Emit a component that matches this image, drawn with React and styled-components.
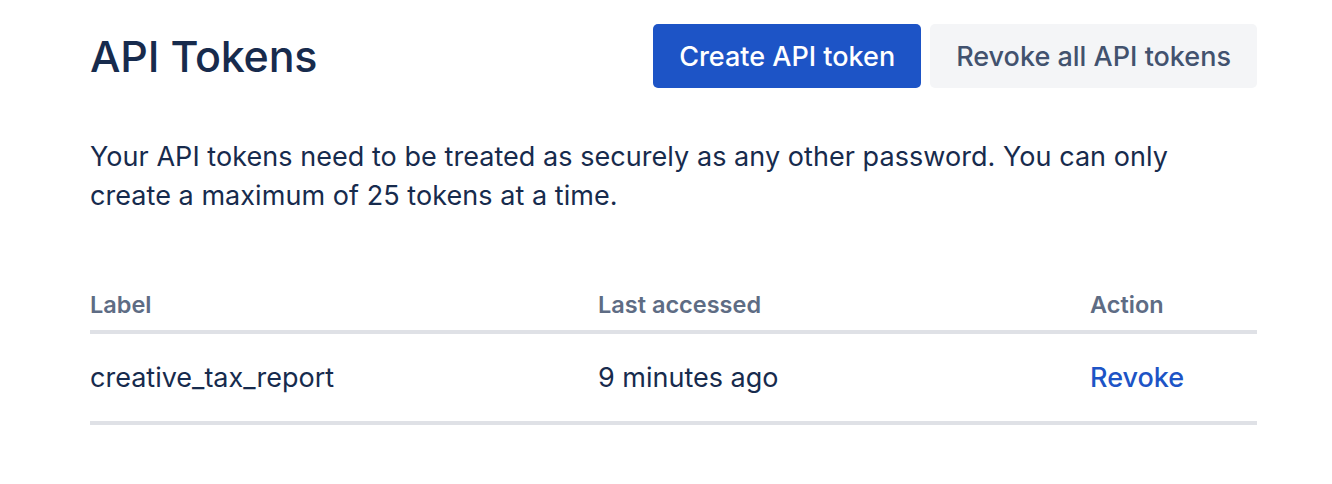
import React from "react";
import styled, { createGlobalStyle } from "styled-components";

const GlobalStyle = createGlobalStyle`
  body {
    margin: 0;
    background: #ffffff;
    font-family: Inter, "Noto Sans", "Liberation Sans", sans-serif;
    color: #172b4d;
  }
`;

const Page = styled.div`
  padding: 24px 75px 0 90px;
  width: 1167px;
`;

const Header = styled.div`
  display: flex;
  align-items: center;
  justify-content: space-between;
  height: 64px;
`;

const Title = styled.h1`
  margin: 0;
  font-size: 43px;
  font-weight: 500;
  letter-spacing: -0.2px;
  color: #172b4d;
`;

const Actions = styled.div`
  display: flex;
  gap: 9px;
`;

const Button = styled.button`
  height: 64px;
  padding: 0 26px;
  border: none;
  border-radius: 5px;
  font-family: inherit;
  font-size: 27px;
  font-weight: 500;
  cursor: pointer;
  background: ${(p) => (p.$primary ? "#1d54c6" : "#f4f5f7")};
  color: ${(p) => (p.$primary ? "#ffffff" : "#42526e")};
`;

const Intro = styled.p`
  margin: 49px 0 0;
  font-size: 27px;
  line-height: 39px;
  letter-spacing: 0.05px;
  color: #172b4d;
`;

const Table = styled.table`
  width: 100%;
  margin-top: 75px;
  border-collapse: collapse;
`;

const Th = styled.th`
  text-align: left;
  padding: 0 0 10px;
  height: 30px;
  line-height: 30px;
  font-size: 23.5px;
  font-weight: 600;
  color: #5e6c84;
  border-bottom: 4px solid #dfe1e6;
  width: ${(p) => p.$w};
`;

const Td = styled.td`
  padding: 0;
  height: 87px;
  font-size: 27px;
  color: #172b4d;
  border-bottom: 4px solid #dfe1e6;
`;

const LinkButton = styled.a`
  color: #1d54c6;
  font-weight: 500;
  text-decoration: none;
  cursor: pointer;
`;

export default function App() {
  return (
    <>
      <GlobalStyle />
      <Page>
        <Header>
          <Title>API Tokens</Title>
          <Actions>
            <Button $primary>Create API token</Button>
            <Button>Revoke all API tokens</Button>
          </Actions>
        </Header>
        <Intro>
          Your API tokens need to be treated as securely as any other password. You can only
          <br />
          create a maximum of 25 tokens at a time.
        </Intro>
        <Table>
          <thead>
            <tr>
              <Th $w="508px">Label</Th>
              <Th $w="492px">Last accessed</Th>
              <Th>Action</Th>
            </tr>
          </thead>
          <tbody>
            <tr>
              <Td>creative_tax_report</Td>
              <Td>9 minutes ago</Td>
              <Td>
                <LinkButton>Revoke</LinkButton>
              </Td>
            </tr>
          </tbody>
        </Table>
      </Page>
    </>
  );
}
